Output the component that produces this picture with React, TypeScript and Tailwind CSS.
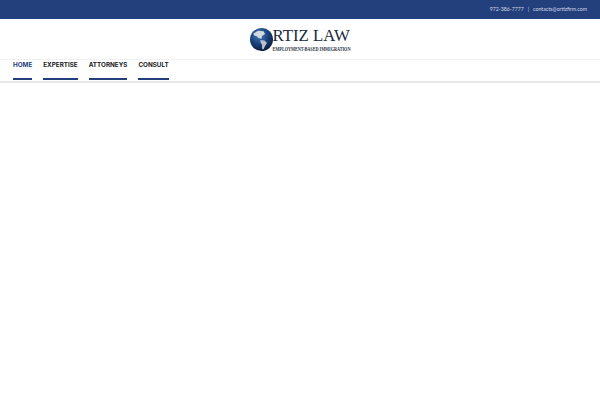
import React from 'react'

const navItems = ['HOME', 'EXPERTISE', 'ATTORNEYS', 'CONSULT']

function Globe() {
  return (
    <svg width="23" height="23" viewBox="0 0 23 23" className="shrink-0">
      <defs>
        <radialGradient id="sea" cx="40%" cy="30%" r="75%">
          <stop offset="0%" stopColor="#4f80b8" />
          <stop offset="50%" stopColor="#1c4480" />
          <stop offset="100%" stopColor="#0a1a36" />
        </radialGradient>
      </defs>
      <circle cx="11.5" cy="11.5" r="11.5" fill="url(#sea)" />
      <path d="M3.5 5.5 L8 2.8 L13.5 3.2 L15 6 L12 8 L11.5 10.8 L8.5 10 L6.5 8 L4 7.5 Z" fill="#d3dadf" />
      <path d="M10.5 12 L14.5 12.5 L17 15 L15 18 L13.5 21.5 L12 20.5 L12 16.5 L10.5 14.5 Z" fill="#b7c3cc" />
    </svg>
  )
}

export default function App() {
  return (
    <div className="flex h-[400px] w-[600px] flex-col overflow-hidden bg-white font-['Lato',sans-serif]">
      <div className="flex h-[19px] items-center justify-end gap-[3px] bg-[#233f7c] pr-[13px] text-[5.2px] text-[#d5dcea]">
        <span>972-386-7777</span>
        <span className="px-[1px]">|</span>
        <span>contacts@ortizfirm.com</span>
      </div>

      <div className="flex h-[41px] items-center justify-center border-b border-[#f0f0f0]">
        <div className="flex items-center">
          <Globe />
          <div className="flex flex-col">
            <span className="font-['Liberation_Serif',serif] text-[16.8px] leading-[17px] text-[#1d2a3f]">RTIZ LAW</span>
            <span className="origin-top scale-y-[1.3] font-['Liberation_Serif',serif] text-[4.2px] font-bold leading-[7px] whitespace-nowrap text-[#2a3240]">EMPLOYMENT-BASED IMMIGRATION</span>
          </div>
        </div>
      </div>

      <nav className="flex h-[23px] gap-[11px] border-b-2 border-[#e8e8e8] pl-[13px]">
        {navItems.map((item, i) => (
          <a
            key={item}
            className={`h-[20px] border-b-2 border-[#233f7c] pt-[1px] font-['Inter',sans-serif] text-[6.3px] font-bold leading-[8px] ${
              i === 0 ? 'text-[#233f7c]' : 'text-[#1a1a1a]'
            }`}
          >
            {item}
          </a>
        ))}
      </nav>
    </div>
  )
}
